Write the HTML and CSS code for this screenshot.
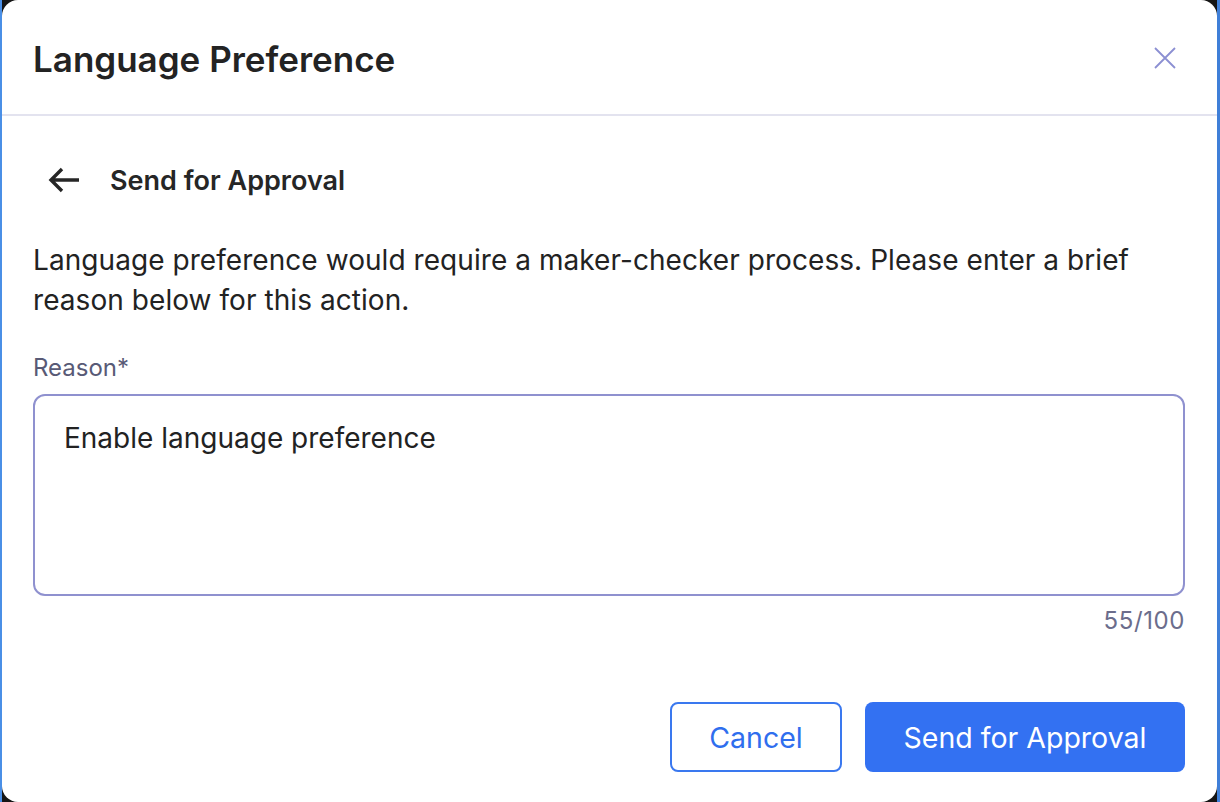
FILE: index.html
```html
<!DOCTYPE html>
<html lang="en">
<head>
<meta charset="utf-8">
<title>Language Preference</title>
<link rel="stylesheet" href="styles.css">
</head>
<body>
<div class="frame">
  <div class="modal">
    <header class="modal-head">
      <h1 class="modal-title">Language Preference</h1>
      <button class="close-btn" aria-label="Close">
        <svg width="24" height="24" viewBox="0 0 24 24"><path d="M2 2 L22 22 M22 2 L2 22" stroke="#8b8fd2" stroke-width="1.8" fill="none"/></svg>
      </button>
    </header>
    <div class="modal-body">
      <div class="back-row">
        <button class="back-btn" aria-label="Back">
          <svg width="34" height="28" viewBox="0 0 34 28"><path d="M32 14 H4 M15 3 L4 14 L15 25" stroke="#262626" stroke-width="3.4" fill="none" stroke-linejoin="miter"/></svg>
        </button>
        <h2 class="sub-title">Send for Approval</h2>
      </div>
      <p class="desc">Language preference would require a maker-checker process. Please enter a brief reason below for this action.</p>
      <label class="field-label" for="reason">Reason*</label>
      <div class="textarea">Enable language preference</div>
      <div class="counter">55/100</div>
      <div class="actions">
        <button class="btn btn-outline">Cancel</button>
        <button class="btn btn-primary">Send for Approval</button>
      </div>
    </div>
  </div>
</div>
</body>
</html>
```
FILE: styles.css
```css
* { box-sizing: border-box; }
html, body { margin: 0; padding: 0; }
body {
  background: #151515;
  font-family: Inter, "Noto Sans", sans-serif;
  color: #222;
}
.frame {
  height: 802px;
  border-left: 2px solid #4a8fe6;
  border-right: 3px solid #3f7fd8;
  background: #151515;
}
.modal {
  height: 802px;
  background: #fff;
  border-radius: 16px;
}
.modal-head {
  height: 116px;
  display: flex;
  align-items: center;
  justify-content: space-between;
  padding: 4px 40px 0 31px;
  border-bottom: 2px solid #e3e3ef;
}
.modal-title {
  margin: 0;
  font-size: 35px;
  font-weight: 600;
  color: #232323;
}
.close-btn {
  background: none;
  border: none;
  padding: 0;
  display: flex;
  margin-top: -2px;
}
.modal-body {
  padding: 44px 32px 0 31px;
}
.back-row {
  display: flex;
  align-items: center;
  height: 40px;
  gap: 29px;
}
.back-btn {
  background: none;
  border: none;
  padding: 0 0 0 14px;
  display: flex;
}
.sub-title {
  margin: 0;
  font-size: 27px;
  font-weight: 600;
  color: #262626;
}
.desc {
  margin: 40px 0 0;
  font-size: 28px;
  letter-spacing: 0.06px;
  line-height: 40px;
  color: #222;
}
.field-label {
  display: block;
  margin-top: 34px;
  font-size: 24px;
  line-height: 28px;
  color: #585a76;
}
.textarea {
  margin-top: 12px;
  height: 202px;
  border: 2px solid #8f91cf;
  border-radius: 12px;
  padding: 26px 29px;
  font-size: 28px;
  line-height: 32px;
  color: #222;
}
.counter {
  margin-top: 11px;
  text-align: right;
  font-size: 24px;
  letter-spacing: 0.6px;
  line-height: 28px;
  color: #6b6d8c;
}
.actions {
  margin-top: 67px;
  display: flex;
  justify-content: flex-end;
  gap: 23px;
}
.btn {
  height: 70px;
  border-radius: 8px;
  font-family: Inter, "Noto Sans", sans-serif;
  font-size: 28.5px;
  padding: 0;
}
.btn-outline {
  width: 172px;
  background: #fff;
  border: 2px solid #3a78ef;
  color: #2f6eee;
}
.btn-primary {
  width: 320px;
  background: #3371f2;
  border: none;
  color: #fff;
}
```
